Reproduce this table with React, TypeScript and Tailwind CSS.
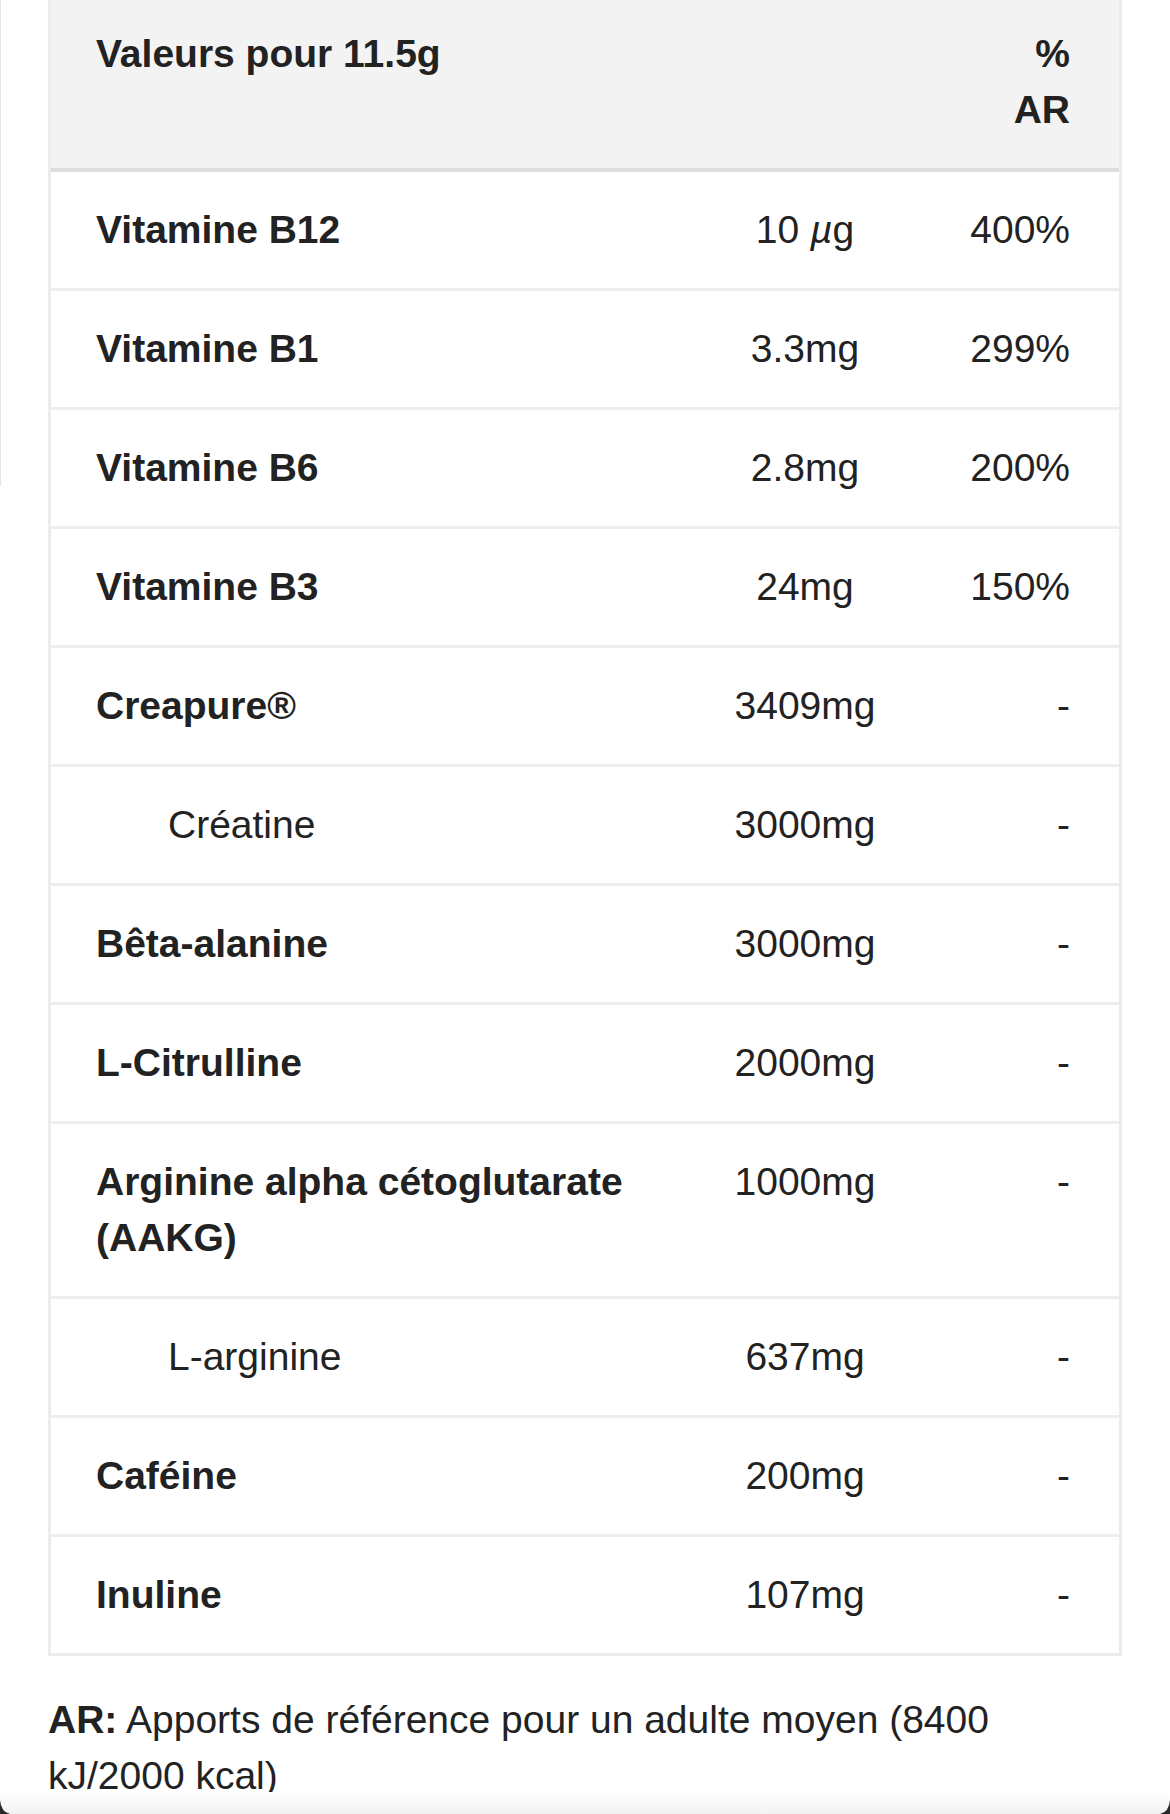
import { FC, ReactNode } from "react";

interface Row {
  name: ReactNode;
  amount: ReactNode;
  ar: string;
  sub?: boolean;
}

const rows: Row[] = [
  { name: "Vitamine B12", amount: <>10 <i>µ</i>g</>, ar: "400%" },
  { name: "Vitamine B1", amount: "3.3mg", ar: "299%" },
  { name: "Vitamine B6", amount: "2.8mg", ar: "200%" },
  { name: "Vitamine B3", amount: "24mg", ar: "150%" },
  { name: "Creapure®", amount: "3409mg", ar: "-" },
  { name: "Créatine", amount: "3000mg", ar: "-", sub: true },
  { name: "Bêta-alanine", amount: "3000mg", ar: "-" },
  { name: "L-Citrulline", amount: "2000mg", ar: "-" },
  { name: "Arginine alpha cétoglutarate (AAKG)", amount: "1000mg", ar: "-" },
  { name: "L-arginine", amount: "637mg", ar: "-", sub: true },
  { name: "Caféine", amount: "200mg", ar: "-" },
  { name: "Inuline", amount: "107mg", ar: "-" },
];

const NutritionRow: FC<{ row: Row; last: boolean }> = ({ row, last }) => {
  return (
    <div
      className={
        "grid grid-cols-[629px_250px_1fr] " +
        (last ? "" : "border-b-[3px] border-[#eeeeee]")
      }
    >
      <div
        className={
          "py-[30px] pr-[45px] " +
          (row.sub ? "pl-[117px] font-normal" : "pl-[45px] font-bold")
        }
      >
        {row.name}
      </div>
      <div className="py-[30px] px-[45px] text-center">{row.amount}</div>
      <div className="py-[30px] pl-[40px] pr-[49px] text-right">{row.ar}</div>
    </div>
  );
};

const App: FC = () => {
  return (
    <div
      className="relative h-[1814px] w-[1170px] overflow-hidden bg-white text-[39px] leading-[56px] text-[#222222]"
      style={{ fontFamily: '"Liberation Sans", Arial, Helvetica, sans-serif' }}
    >
      <div className="absolute left-0 top-0 h-[486px] w-px bg-[#e6e6e6]" />

      <div className="px-[48px]">
        <div className="border-x-[3px] border-b-[3px] border-[#ececec]">
          <div className="grid grid-cols-[629px_250px_1fr] border-b-4 border-[#dddddd] bg-[#f3f3f3] font-bold">
            <div className="pl-[45px] pr-[45px] pt-[26px] pb-[30px]">Valeurs pour 11.5g</div>
            <div />
            <div className="pl-[40px] pr-[49px] pt-[26px] pb-[30px] text-right">
              %<br />AR
            </div>
          </div>
          {rows.map((row, i) => (
            <NutritionRow key={i} row={row} last={i === rows.length - 1} />
          ))}
        </div>

        <p className="mt-[36px] w-[1000px]">
          <b>AR:</b> Apports de référence pour un adulte moyen (8400 kJ/2000 kcal)
        </p>
      </div>

      <div className="absolute bottom-0 inset-x-0 h-[22px] bg-linear-to-b from-white to-[#f2f2f2]" />
      <svg className="absolute bottom-0 left-0" width="10" height="14" viewBox="0 0 10 14">
        <path d="M0 0 Q1 12 10 14 L0 14 Z" fill="#2a2a2a" />
      </svg>
      <svg className="absolute bottom-0 right-0" width="10" height="14" viewBox="0 0 10 14">
        <path d="M10 0 Q9 12 0 14 L10 14 Z" fill="#2a2a2a" />
      </svg>
    </div>
  );
};

export default App;
